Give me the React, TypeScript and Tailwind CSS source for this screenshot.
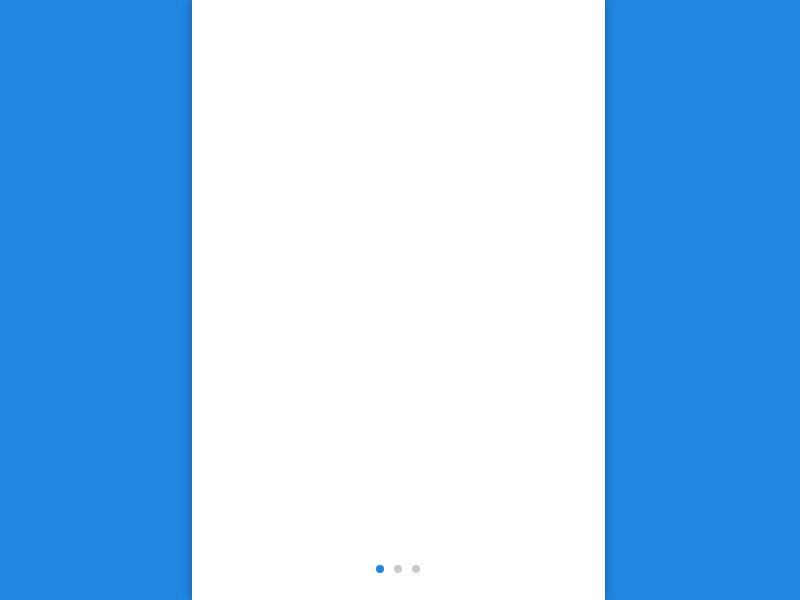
const App = () => {
  return (
    <div className="h-[600px] w-[800px] bg-[#2187e3] grid grid-cols-[192px_413px_1fr] overflow-hidden">
      <div />
      <div className="relative z-10 h-full bg-white shadow-[0_0_10px_rgba(0,0,0,0.35)] flex flex-col justify-end items-center pb-[27px]">
        <div className="flex items-center gap-[10px] ml-[-1px]">
          <span className="w-2 h-2 rounded-full bg-[#1e86e2]" />
          <span className="w-2 h-2 rounded-full bg-[#cacaca]" />
          <span className="w-2 h-2 rounded-full bg-[#cacaca]" />
        </div>
      </div>
      <div />
    </div>
  );
};

export default App;
